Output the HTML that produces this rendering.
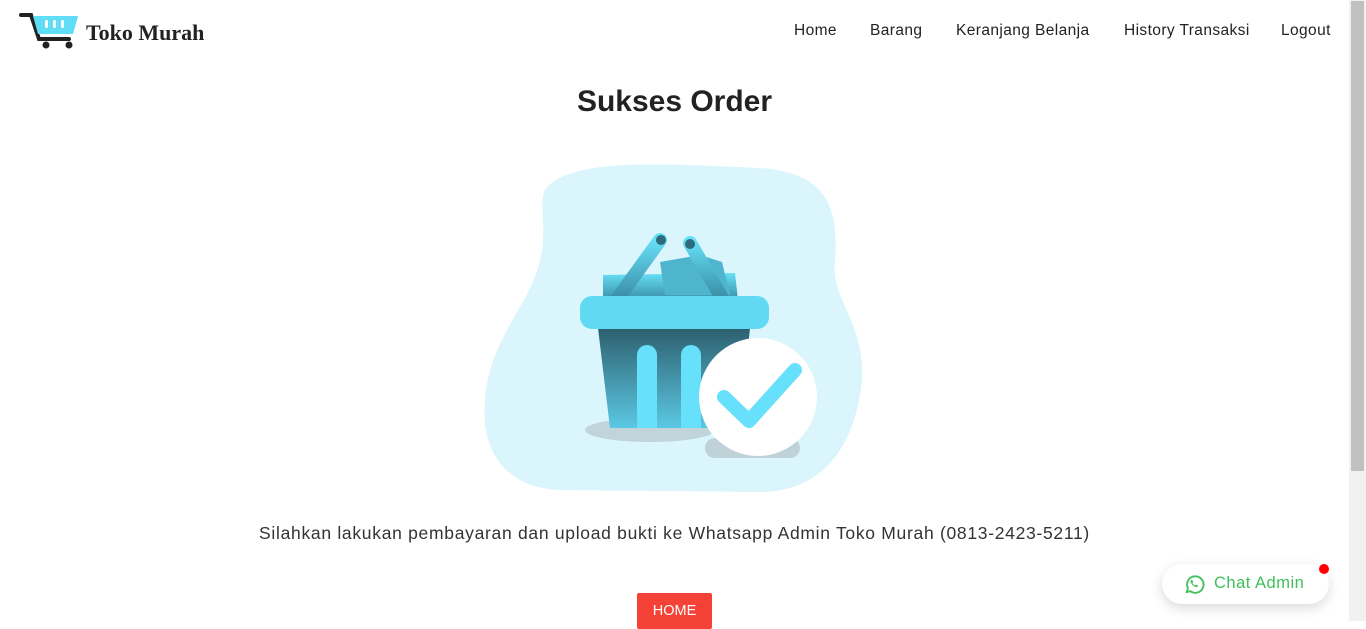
<!DOCTYPE html><html><head><style>
body{margin:0;width:1366px;height:621px;overflow:hidden;background:#fff;font-family:"Liberation Sans",sans-serif;position:relative}
.nav a{position:absolute;top:22px;font-size:15.5px;color:#222;text-decoration:none;letter-spacing:0.4px}
</style></head><body>
<svg style="position:absolute;left:19px;top:12px" width="60" height="38" viewBox="0 0 60 38"><path d="M2 3h10l8 24h30" fill="none" stroke="#222" stroke-width="4" stroke-linecap="round"/><path d="M14 4h45l-5 18H19z" fill="#5fdcf6"/><rect x="26" y="8" width="3" height="8" rx="1.5" fill="#fff"/><rect x="34" y="8" width="3" height="8" rx="1.5" fill="#fff"/><rect x="42" y="8" width="3" height="8" rx="1.5" fill="#fff"/><circle cx="27" cy="33" r="3.5" fill="#222"/><circle cx="50" cy="33" r="3.5" fill="#222"/></svg>
<div style="position:absolute;left:86px;top:20px;font-family:'Liberation Serif',serif;font-weight:bold;font-size:22px;color:#222">Toko Murah</div>
<div class="nav"><a style="left:794px">Home</a><a style="left:870px">Barang</a><a style="left:956px">Keranjang Belanja</a><a style="left:1124px">History Transaksi</a><a style="left:1281px">Logout</a></div>
<div style="position:absolute;left:0;width:1349px;top:85px;text-align:center;font-size:30px;font-weight:bold;color:#222">Sukses Order</div>
<svg style="position:absolute;left:0;top:0" width="1349" height="621">
<defs><linearGradient id="b" x1="0" y1="0" x2="0" y2="1"><stop offset="0" stop-color="#2d5f6e"/><stop offset="1" stop-color="#5bc8e3"/></linearGradient>
<linearGradient id="h" x1="0" y1="0" x2="0" y2="1"><stop offset="0" stop-color="#66dff7"/><stop offset="1" stop-color="#3a8ea6"/></linearGradient></defs>
<path d="M545 190C570 155 680 165 760 168C820 172 840 200 835 260C830 300 865 320 862 380C855 450 820 492 760 492L560 490C505 488 480 450 485 400C490 330 540 300 543 240C544 215 540 200 545 190Z" fill="#daf6fc"/>
<ellipse cx="650" cy="430" rx="65" ry="12" fill="#c0d4da"/><rect x="705" y="438" width="95" height="20" rx="10" fill="#bfd2d8"/>
<path d="M603 275L735 273L738 300L603 300Z" fill="url(#h)"/>
<path d="M660 262L700 255L722 262L730 295L665 295Z" fill="#4fb5cf"/>
<path d="M618 298L660 240M722 298L690 243" stroke="url(#h)" stroke-width="14" stroke-linecap="round"/>
<circle cx="661" cy="240" r="5" fill="#2d6a7c"/><circle cx="690" cy="244" r="5" fill="#2d6a7c"/>
<path d="M598 328H750L740 428H610Z" fill="url(#b)"/>
<rect x="580" y="296" width="189" height="33" rx="12" fill="#62d9f2"/>
<rect x="637" y="345" width="20" height="83" rx="10" fill="#66e0fb"/><rect x="681" y="345" width="20" height="83" rx="10" fill="#66e0fb"/>
<rect x="637" y="418" width="20" height="10" fill="#66e0fb"/><rect x="681" y="418" width="20" height="10" fill="#66e0fb"/>
<circle cx="758" cy="397" r="59" fill="#fff"/>
<path d="M724 397L749 421L795 370" fill="none" stroke="#66e0fb" stroke-width="14" stroke-linecap="round" stroke-linejoin="round"/>
</svg>
<div style="position:absolute;left:0;width:1349px;top:523px;text-align:center;font-size:17.5px;color:#333;letter-spacing:0.7px">Silahkan lakukan pembayaran dan upload bukti ke Whatsapp Admin Toko Murah (0813-2423-5211)</div>
<div style="position:absolute;left:637px;top:593px;width:75px;height:36px;background:#f44336;color:#fff;font-size:14.5px;text-align:center;line-height:36px;border-radius:2px">HOME</div>
<div style="position:absolute;left:1162px;top:564px;width:167px;height:40px;border-radius:20px;background:#fff;box-shadow:0 4px 12px rgba(0,0,0,.15)"></div>
<svg style="position:absolute;left:1183px;top:573px" width="22" height="22" viewBox="0 0 24 24"><path d="M4 21l1.3-4.5A9 9 0 1 1 8 19.8z" fill="none" stroke="#3fc05a" stroke-width="2" stroke-linejoin="round"/><path d="M9 7.5c-.8.5-1 1.5-.5 2.7 1 2.3 2.7 4 5 5 1.2.5 2.2.3 2.7-.5l-.3-1.2-1.8-.8-1 1c-1.2-.5-2.3-1.6-2.9-2.9l1-1-.8-1.8z" fill="#3fc05a"/></svg>
<div style="position:absolute;left:1214px;top:574px;font-size:16.5px;color:#3fc05a;letter-spacing:0.5px">Chat Admin</div>
<div style="position:absolute;left:1319px;top:564px;width:10px;height:10px;border-radius:50%;background:#f00"></div>
<div style="position:absolute;left:1349px;top:0;width:17px;height:621px;background:#f1f1f1"><div style="margin-top:1px;width:13px;height:470px;background:#c1c1c1;margin-left:2px"></div></div>
</body></html>
